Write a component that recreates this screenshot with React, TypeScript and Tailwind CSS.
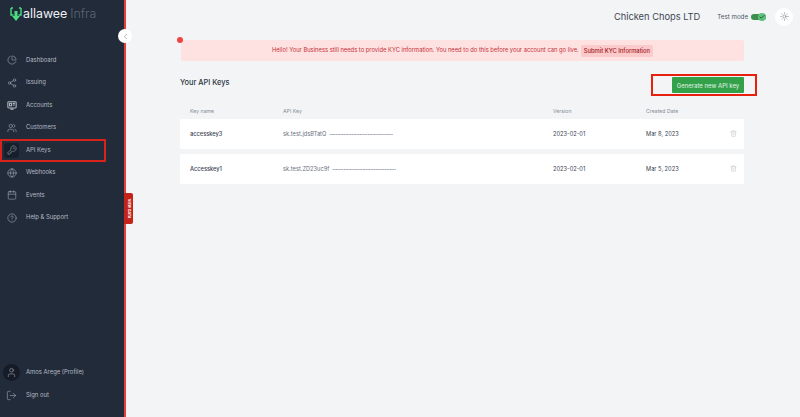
import { Calendar, Check, ChevronLeft, CircleHelp, Globe, KeyRound, LogOut, PieChart, Share2, Sun, Trash2, User, Users } from "lucide-react";

function AccountsIcon({ size, className, strokeWidth }: { size: number; className?: string; strokeWidth?: number }) {
  return (
    <svg width={size} height={size} viewBox="0 0 12 12" fill="none" stroke="currentColor" strokeWidth={strokeWidth} className={className}>
      <rect x="1" y="2" width="10" height="7.5" rx="1" />
      <rect x="3" y="4" width="2.5" height="3" />
      <path d="M7 4h2.5M7 6h2.5M4 11h4M6 9.5V11" />
    </svg>
  );
}

const navItems = [
  { label: "Dashboard", icon: PieChart },
  { label: "Issuing", icon: Share2 },
  { label: "Accounts", icon: AccountsIcon },
  { label: "Customers", icon: Users },
  { label: "API Keys", icon: KeyRound, active: true },
  { label: "Webhooks", icon: Globe },
  { label: "Events", icon: Calendar },
  { label: "Help & Support", icon: CircleHelp },
];

const keys = [
  { name: "accesskey3", prefix: "sk.test.jdsBTatQ", version: "2023-02-01", date: "Mar 8, 2023" },
  { name: "Accesskey1", prefix: "sk.test.ZD23uc9f", version: "2023-02-01", date: "Mar 5, 2023" },
];

const font = "font-['Inter','Liberation_Sans',sans-serif]";

function Sidebar() {
  return (
    <aside className="relative flex h-[417px] w-[126px] shrink-0 flex-col border-r-2 border-[#e5413a] bg-[#222b3a]">
      <div className="flex h-[28px] items-center pl-[10px] pt-[1px]">
        <svg width="12" height="15" viewBox="0 0 12 15">
          <path d="M1 1v7h2.5M11 1v7H8.5M1 1h2M11 1H9" fill="none" stroke="#4ade80" strokeWidth="1.4" />
          <path d="M4.5 4h3v5H10l-4 5-4-5h2.5z" fill="#4ade80" />
        </svg>
        <span className="ml-[1px] text-[12.4px] leading-none text-[#eef0f3]">allawee</span>
        <span className="ml-[3px] text-[12.4px] font-light leading-none text-[#5c6675]">Infra</span>
      </div>
      <button className="absolute left-[118px] top-[29px] z-10 flex h-[14px] w-[14px] items-center justify-center rounded-full bg-white">
        <ChevronLeft size={9} className="text-[#9aa2ad]" />
      </button>
      <nav className="mt-[21px] flex flex-col">
        {navItems.map((item) => (
          <div key={item.label} className="relative flex h-[22.5px] items-center pl-[4px]">
            <span className={`flex h-[15px] w-[15px] items-center justify-center rounded-[3px] ${item.active ? "bg-[#171f2c]" : ""}`}>
              <item.icon size={10} className="text-[#aeb4bd]" strokeWidth={1.3} />
            </span>
            <span className="ml-[7px] text-[5.9px] text-[#b4bac3]">{item.label}</span>
            {item.active && <span className="absolute left-0 top-0 h-[23px] w-[106px] border-2 border-[#d8231a]" />}
          </div>
        ))}
      </nav>
      <div className="mt-auto flex flex-col pb-[11px]">
        <div className="flex h-[23px] items-center pl-[3px]">
          <span className="flex h-[17px] w-[17px] items-center justify-center rounded-full bg-[#151c28]">
            <User size={11} className="text-[#aeb4bd]" strokeWidth={1.2} />
          </span>
          <span className="ml-[6px] text-[5.9px] text-[#b4bac3]">Amos Arege (Profile)</span>
        </div>
        <div className="flex h-[22px] items-center pl-[6px]">
          <LogOut size={11} className="text-[#aeb4bd]" strokeWidth={1.2} />
          <span className="ml-[9px] text-[5.9px] text-[#b4bac3]">Sign out</span>
        </div>
      </div>
      <div className="absolute left-[124px] top-[193px] z-10 flex h-[31px] w-[9px] items-center justify-center rounded-r-[2px] bg-[#c4231c]">
        <span className="rotate-90 whitespace-nowrap text-[3.5px] font-bold text-white">VIEW DATA</span>
      </div>
    </aside>
  );
}

function TopBar() {
  return (
    <header className="flex h-[33px] items-center justify-end pr-[7px]">
      <span className="text-[9.3px] text-[#3f4855]">Chicken Chops LTD</span>
      <span className="ml-[17px] text-[6.2px] text-[#4b5563]">Test mode</span>
      <span className="ml-[3px] flex h-[6px] w-[15px] items-center justify-end rounded-full bg-[#3d8f4f]">
        <span className="flex h-[8px] w-[8px] items-center justify-center rounded-full bg-[#5fc27a]">
          <Check size={6} strokeWidth={3} className="text-[#1f2937]" />
        </span>
      </span>
      <span className="ml-[9px] flex h-[18px] w-[18px] items-center justify-center rounded-full bg-white">
        <Sun size={9} className="text-[#6b7280]" strokeWidth={1.5} />
      </span>
    </header>
  );
}

function KycBanner() {
  return (
    <div className="relative ml-[1px] mt-[7px] flex h-[21px] items-center justify-center rounded-[2px] bg-[#fee2e2] text-[5.8px] text-[#c62f35]">
      <span className="absolute left-[-4px] top-[-3px] h-[6px] w-[6px] rounded-full bg-[#ef4444]" />
      <span>Hello! Your Business still needs to provide KYC information. You need to do this before your account can go live.</span>
      <span className="ml-[2px] rounded-[2px] bg-[#fbcaca] px-[3px] py-[3px] font-medium leading-[6px] text-[#a3161c]">Submit KYC Information</span>
    </div>
  );
}

function KeysTable() {
  return (
    <div className="mt-[8px]">
      <div className="flex h-[18px] items-center pt-[3px] text-[5.2px] text-[#858c96]">
        <span className="w-[103px] pl-[10px]">Key name</span>
        <span className="w-[270px]">API Key</span>
        <span className="w-[93px]">Version</span>
        <span>Created Date</span>
      </div>
      <div className="flex flex-col gap-[5px]">
        {keys.map((k) => (
          <div key={k.name} className="flex h-[30px] items-center bg-white text-[5.7px]">
            <span className="w-[103px] pl-[10px] font-medium text-[#374151]">{k.name}</span>
            <span className="flex w-[270px] items-center text-[#6b7280]">
              <span>{k.prefix}</span>
              <span className="ml-[3px] text-[3px] tracking-[-0.1px]">••••••••••••••••••••••••••••••••••••••••</span>
            </span>
            <span className="w-[93px] text-[#374151]">{k.version}</span>
            <span className="w-[84px] text-[#374151]">{k.date}</span>
            <Trash2 size={7} className="mb-[2px] text-[#c9cdd2]" />
          </div>
        ))}
      </div>
    </div>
  );
}

export default function App() {
  return (
    <div className={`flex h-[417px] w-[800px] overflow-hidden bg-[#f3f4f6] ${font}`}>
      <Sidebar />
      <main className="flex-1">
        <TopBar />
        <div className="ml-[54px] mr-[56px]">
          <KycBanner />
          <div className="mt-[10px] flex h-[22px] items-center justify-between">
            <h2 className="pt-[2px] text-[7.4px] font-medium text-[#2b3442]">Your API Keys</h2>
            <div className="relative">
              <button className="mt-[6px] block h-[16px] w-[72px] rounded-[1px] bg-[#32a14a] text-[6px] text-[#e4f3e7]">Generate new API key</button>
              <span className="absolute left-[-21px] top-[3px] h-[22px] w-[106px] border-2 border-[#e8200f]" />
            </div>
          </div>
          <KeysTable />
        </div>
      </main>
    </div>
  );
}
